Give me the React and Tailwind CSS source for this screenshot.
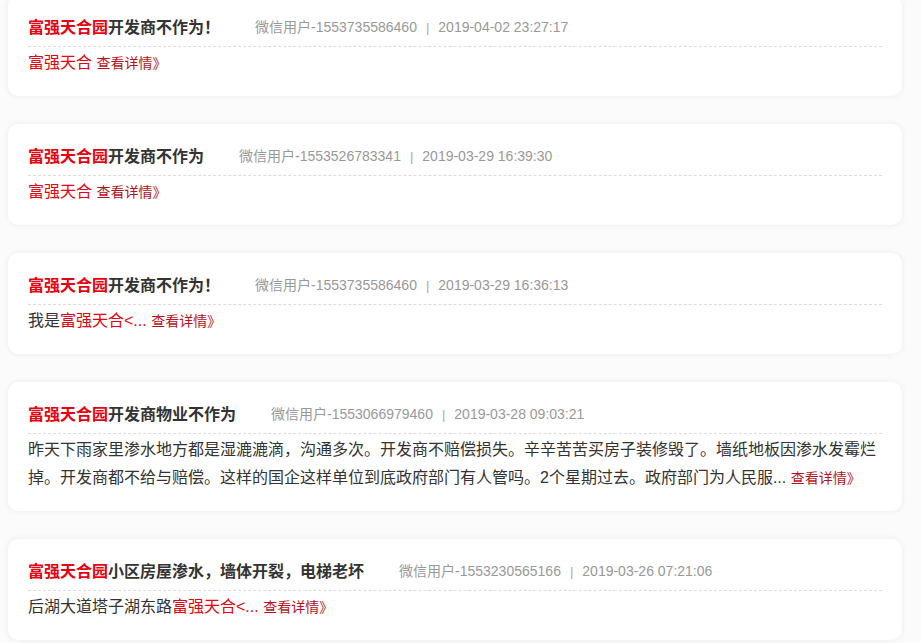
import React from "react";

const items = [
  {
    title: "开发商不作为！",
    user: "微信用户-1553735586460",
    date: "2019-04-02 23:27:17",
    body: [{ t: "富强天合", red: true }],
  },
  {
    title: "开发商不作为",
    user: "微信用户-1553526783341",
    date: "2019-03-29 16:39:30",
    body: [{ t: "富强天合", red: true }],
  },
  {
    title: "开发商不作为！",
    user: "微信用户-1553735586460",
    date: "2019-03-29 16:36:13",
    body: [{ t: "我是" }, { t: "富强天合<...", red: true }],
  },
  {
    title: "开发商物业不作为",
    user: "微信用户-1553066979460",
    date: "2019-03-28 09:03:21",
    body: [
      {
        t: "昨天下雨家里渗水地方都是湿漉漉滴，沟通多次。开发商不赔偿损失。辛辛苦苦买房子装修毁了。墙纸地板因渗水发霉烂掉。开发商都不给与赔偿。这样的国企这样单位到底政府部门有人管吗。2个星期过去。政府部门为人民服...",
      },
    ],
  },
  {
    title: "小区房屋渗水，墙体开裂，电梯老坏",
    user: "微信用户-1553230565166",
    date: "2019-03-26 07:21:06",
    body: [{ t: "后湖大道塔子湖东路" }, { t: "富强天合<...", red: true }],
  },
];

function Card({ item }) {
  return (
    <div className="mx-[8px] w-[894px] rounded-[10px] bg-white px-[20px] pt-[19px] pb-[19px] shadow-[0_0_6px_rgba(0,0,0,0.07)]">
      <div className="flex items-center border-b border-dashed border-[#dcdcdc] pb-[5px]">
        <span className="text-[16px] leading-[26px] font-bold text-[#333]">
          <span className="text-[#e8000f]">富强天合园</span>
          {item.title}
        </span>
        <span className="ml-[35px] text-[14px] leading-[26px] text-[#999]">
          {item.user}
          <span className="mx-[9px] text-[13px] text-[#aaa]">|</span>
          {item.date}
        </span>
      </div>
      <div className="pt-[2px] text-[16px] leading-[28px] text-[#333]">
        {item.body.map((b, i) => (
          <span key={i} className={b.red ? "text-[#e8000f]" : ""}>
            {b.t}
          </span>
        ))}{" "}
        <span className="text-[14px] text-[#b5121b]">查看详情》</span>
      </div>
    </div>
  );
}

export default function App() {
  return (
    <div
      className="min-h-[643px] w-[921px] overflow-hidden bg-[#fbfbfc]"
      style={{ fontFamily: '"Liberation Sans", "Noto Sans CJK SC", sans-serif' }}
    >
      <div className="-mt-[5px] flex flex-col gap-[28px]">
        {items.map((it, i) => (
          <Card key={i} item={it} />
        ))}
      </div>
    </div>
  );
}
